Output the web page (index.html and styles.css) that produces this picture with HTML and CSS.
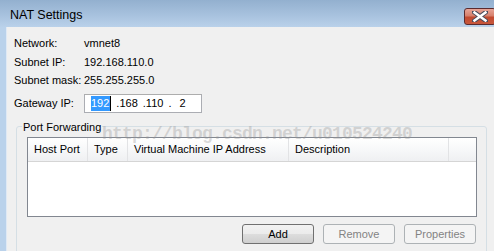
FILE: index.html
```html
<!DOCTYPE html>
<html lang="en">
<head>
    <meta charset="UTF-8">
    <title>NAT Settings</title>
    <link rel="stylesheet" href="styles.css">
</head>
<body>

    <div class="window">
        <div class="titlebar">
            <span class="title">NAT Settings</span>
            <div class="close-btn">
                <svg width="16" height="11" viewBox="0 0 16 11">
                    <path d="M2 1 L14 10 M14 1 L2 10" stroke="#4a4a5a" stroke-width="4.5" stroke-linecap="square"/>
                    <path d="M2.5 1.5 L13.5 9.5 M13.5 1.5 L2.5 9.5" stroke="#ffffff" stroke-width="2.5" stroke-linecap="square"/>
                </svg>
            </div>
        </div>

        <div class="frame">
            <div class="frame-edge"></div>
            <div class="content">
                <div class="info">
                    <span>Network:</span><span>vmnet8</span>
                    <span>Subnet IP:</span><span>192.168.110.0</span>
                    <span>Subnet mask:</span><span>255.255.255.0</span>
                </div>

                <div class="gateway">
                    <span class="gateway-label">Gateway IP:</span>
                    <div class="ip-input">
                        <span class="sel">192</span>
                        <span>.168</span>
                        <span>.110</span>
                        <span>.</span>
                        <span class="last">2</span>
                    </div>
                </div>

                <fieldset class="group">
                    <legend>Port Forwarding</legend>
                    <div class="list">
                        <div class="list-head">
                            <div class="col c1">Host Port</div>
                            <div class="col c2">Type</div>
                            <div class="col c3">Virtual Machine IP Address</div>
                            <div class="col c4">Description</div>
                            <div class="col c5"></div>
                        </div>
                    </div>
                    <div class="buttons">
                        <button class="btn">Add</button>
                        <button class="btn" disabled>Remove</button>
                        <button class="btn" disabled>Properties</button>
                    </div>
                </fieldset>
            </div>
        </div>

        <div class="watermark">http://blog.csdn.net/u010524240</div>
    </div>

</body>
</html>
```

FILE: styles.css
```css
body {
    margin: 0;
    font-family: "Liberation Sans", Arial, sans-serif;
    font-size: 11px;
    color: #000;
    background-color: #f0f0f0;
    overflow: hidden;
}

.window {
    position: relative;
    width: 494px;
    height: 251px;
    overflow: hidden;
}

.titlebar {
    height: 27px;
    display: flex;
    justify-content: space-between;
    align-items: flex-start;
    background: linear-gradient(to bottom, #93b0cf, #a9c3df 60%, #b9d1ea);
}

.title {
    font-size: 12.5px;
    line-height: 14px;
    margin: 8px 0 0 10px;
}

.close-btn {
    width: 30px;
    height: 15px;
    margin: 8px -2px 0 0;
    border: 1px solid #5b2b2e;
    border-radius: 3px;
    background: linear-gradient(to bottom, #e8a597, #d6806c 45%, #c24a30 55%, #c8583c);
    display: flex;
    justify-content: center;
    align-items: center;
}

.frame {
    display: flex;
    height: 224px;
}

.frame-edge {
    width: 6px;
    background-color: #bad2eb;
    border-right: 1px solid #dfe9f5;
}

.content {
    flex: 1;
    padding: 7px 0 0 7px;
    background-color: #f0f0f0;
}

.info {
    display: grid;
    grid-template-columns: 70px auto;
    grid-auto-rows: 18.5px;
    line-height: 18px;
}

.gateway {
    display: flex;
    align-items: center;
    margin-top: 4px;
}

.gateway-label {
    width: 70px;
}

.ip-input {
    width: 110px;
    height: 17px;
    padding-left: 6px;
    border: 1px solid #abadb3;
    border-top-color: #adadad;
    background-color: #fff;
    display: flex;
    align-items: center;
    gap: 5px;
    font-size: 11px;
}

.sel {
    background-color: #3399ff;
    color: #fff;
    line-height: 15px;
    padding-right: 1px;
    border-right: 1px solid #000;
}

.last {
    margin-left: 3px;
}

.group {
    margin: 7px 0 0 2px;
    width: 450px;
    padding: 0 9px 0 10px;
    border: 1px solid #d5dfe5;
    border-radius: 3px;
    height: 140px;
}

.group legend {
    padding: 0 1px;
    margin-left: -5px;
    line-height: 14px;
}

.list {
    margin-top: 3px;
    width: 448px;
    height: 78px;
    border: 1px solid #828790;
    background-color: #fff;
}

.list-head {
    display: flex;
    height: 23px;
    border-bottom: 1px solid #d5d5d5;
    background: linear-gradient(to bottom, #ffffff, #f7f8f9 50%, #eff0f2);
}

.col {
    line-height: 23px;
    padding-left: 6px;
    border-right: 1px solid #e2e3e5;
    box-sizing: border-box;
}

.c1 { width: 60px; }
.c2 { width: 40px; }
.c3 { width: 161px; }
.c4 { width: 160px; }
.c5 { flex: 1; border-right: none; }

.buttons {
    display: flex;
    justify-content: flex-end;
    gap: 9px;
    margin-top: 7px;
    width: 449px;
}

.btn {
    width: 72px;
    height: 20px;
    padding: 0;
    font-family: "Liberation Sans", Arial, sans-serif;
    font-size: 11px;
    color: #000;
    border: 1px solid #707070;
    border-radius: 3px;
    background: linear-gradient(to bottom, #f2f2f2, #ebebeb 50%, #dddddd 50%, #cfcfcf);
}

.btn:disabled {
    color: #838383;
    border-color: #adb2b5;
    background: #f4f4f4;
}

.watermark {
    position: absolute;
    left: 102px;
    top: 123px;
    font-family: "Liberation Mono", "Courier New", monospace;
    font-size: 18px;
    font-weight: bold;
    letter-spacing: -0.8px;
    line-height: 22px;
    color: rgba(150, 150, 150, 0.35);
    pointer-events: none;
}
```
